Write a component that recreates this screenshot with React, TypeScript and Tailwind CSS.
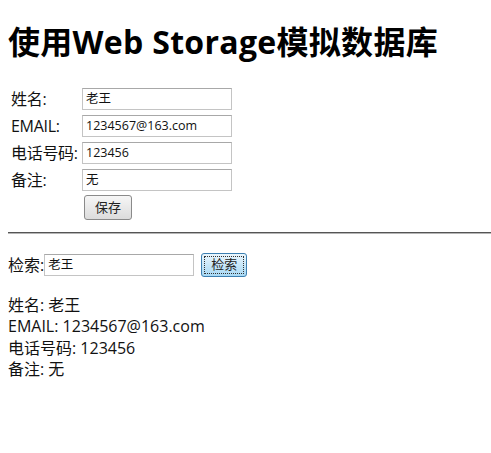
import React from "react";

const font = { fontFamily: '"Open Sans", "Noto Sans CJK SC", sans-serif' };

function Field({ label, value }: { label: string; value: string }) {
  return (
    <div className="flex items-center h-[27px]">
      <div className="w-[74px] pl-[3px] text-[16px] leading-[20px] text-[#111] whitespace-nowrap tracking-[-0.3px]">{label}</div>
      <div className="w-[150px] h-[22px] border border-[#c4c4c4] border-t-[#a8a8a8] bg-white flex items-center pl-[3px] pt-[1px] text-[12.5px] text-[#111]">
        {value}
      </div>
    </div>
  );
}

export default function App() {
  return (
    <div className="bg-white min-h-[453px] w-[491px] overflow-hidden pl-[8px] text-[#111]" style={font}>
      <h1 className="pt-[20px] text-[32px] leading-[44px] font-bold text-black tracking-[0.3px] whitespace-nowrap">
        使用Web Storage模拟数据库
      </h1>
      <div className="mt-[21px] flex flex-col">
        <Field label="姓名:" value="老王" />
        <Field label="EMAIL:" value="1234567@163.com" />
        <Field label="电话号码:" value="123456" />
        <Field label="备注:" value="无" />
        <div className="flex h-[29px] items-center pl-[76px]">
          <div className="w-[48px] h-[25px] border border-[#8a8a8a] rounded-[3px] bg-gradient-to-b from-[#f6f6f6] to-[#dcdcdc] flex items-center justify-center text-[13px] text-[#222]">
            保存
          </div>
        </div>
      </div>
      <div className="mt-[10px] h-[2px] border-t border-[#555] border-b border-b-[#b5b5b5]" />
      <div className="mt-[19px] flex items-center h-[24px]">
        <span className="text-[16px] leading-[20px]">检索:</span>
        <div className="w-[150px] h-[22px] border border-[#c4c4c4] border-t-[#a8a8a8] flex items-center pl-[3px] pt-[1px] text-[12.5px]">
          老王
        </div>
        <div className="ml-[7px] w-[46px] h-[24px] border border-[#3c7fb1] rounded-[3px] bg-gradient-to-b from-[#eaf6fd] to-[#a7d9f5] flex items-center justify-center p-[2px]">
          <div className="w-full h-full border border-dotted border-[#333] flex items-center justify-center text-[13px] text-[#222]">
            检索
          </div>
        </div>
      </div>
      <div className="mt-[18px] text-[16px] leading-[21.3px]">
        <div>姓名: 老王</div>
        <div>EMAIL: 1234567@163.com</div>
        <div>电话号码: 123456</div>
        <div>备注: 无</div>
      </div>
    </div>
  );
}
